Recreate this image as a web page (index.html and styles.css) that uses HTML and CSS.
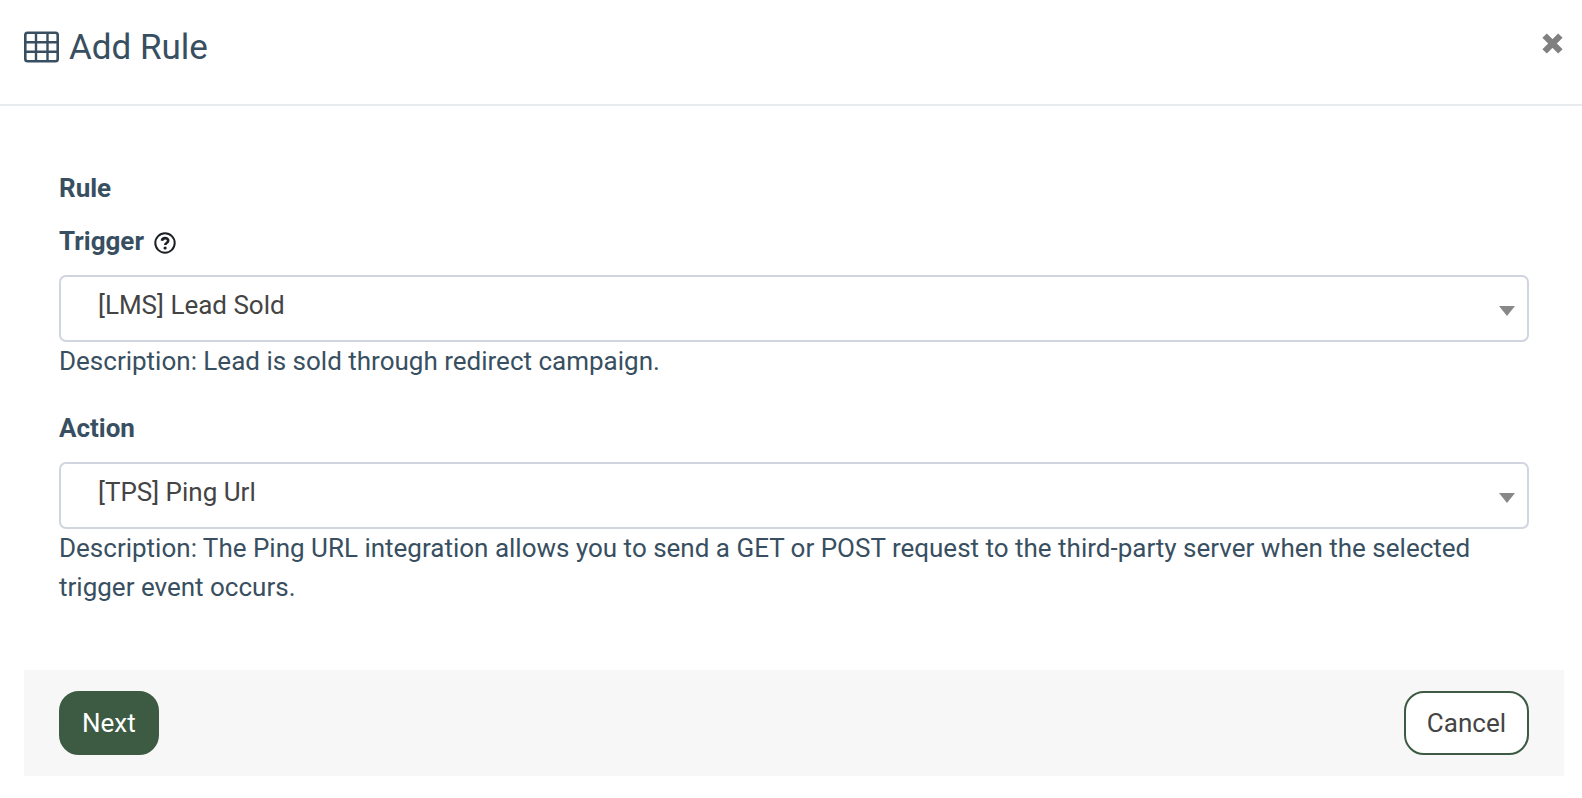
FILE: index.html
```html
<!DOCTYPE html>
<html lang="en">
<head>
  <meta charset="UTF-8">
  <meta name="viewport" content="width=device-width, initial-scale=1.0">
  <title>Add Rule</title>
  <link rel="stylesheet" href="styles.css">
</head>
<body>

  <div class="modal">
    <!-- Header -->
    <header class="modal-header">
      <h1 class="modal-title">
        <svg class="table-icon" viewBox="0 0 36 32" aria-hidden="true">
          <path class="table-frame" fill-rule="evenodd" d="M3.5 0.5h28a3.5 3.5 0 0 1 3.5 3.5v24a3.5 3.5 0 0 1-3.5 3.5h-28A3.5 3.5 0 0 1 0 28V4A3.5 3.5 0 0 1 3.5.5zM3.6 3a1 1 0 0 0-1 1v24a1 1 0 0 0 1 1h27.8a1 1 0 0 0 1-1V4a1 1 0 0 0-1-1z"/>
          <path d="M12 2v28M23.5 2v28M1.5 11.3h32M1.5 20.7h32"/>
        </svg>
        Add Rule
      </h1>
      <button class="close-button" type="button" aria-label="Close">
        <svg viewBox="0 0 20 20" aria-hidden="true">
          <path d="M2.5 2.5l15 15M17.5 2.5l-15 15"/>
        </svg>
      </button>
    </header>

    <form class="rule-form">
      <div class="form-body">
        <h2 class="section-title">Rule</h2>

        <!-- Trigger -->
        <div class="form-group">
          <div class="label-row">
            <label for="trigger">Trigger</label>
            <svg class="help-icon" viewBox="0 0 22 22" role="img" aria-label="Help">
              <circle cx="11" cy="11" r="9.7"/>
              <path d="M7.9 8.7C8.2 6.9 9.4 6.1 11.1 6.1c1.8 0 3.1 1 3.1 2.5 0 1.2-.7 1.8-1.6 2.4-.9.6-1.4 1-1.4 2.1"/>
              <circle class="help-dot" cx="11.1" cy="16" r="1.6"/>
            </svg>
          </div>
          <div class="select-wrap">
            <select id="trigger">
              <option>[LMS] Lead Sold</option>
            </select>
          </div>
          <p class="description">Description: Lead is sold through redirect campaign.</p>
        </div>

        <!-- Action -->
        <div class="form-group">
          <div class="label-row">
            <label for="action">Action</label>
          </div>
          <div class="select-wrap">
            <select id="action">
              <option>[TPS] Ping Url</option>
            </select>
          </div>
          <p class="description">Description: The Ping URL integration allows you to send a GET or POST request to the third-party server when the selected trigger event occurs.</p>
        </div>
      </div>

      <!-- Buttons -->
      <footer class="form-footer">
        <button class="button next-button" type="button">Next</button>
        <button class="button cancel-button" type="button">Cancel</button>
      </footer>
    </form>
  </div>

</body>
</html>
```

FILE: styles.css
```css
* {
  box-sizing: border-box;
}

body {
  margin: 0;
  background-color: #fff;
  font-family: Roboto, sans-serif;
  font-size: 26px;
  line-height: 39px;
  color: #384f61;
}

h1, h2, p {
  margin: 0;
}

/* Header */
.modal-header {
  display: flex;
  justify-content: space-between;
  align-items: flex-start;
  padding: 24px 19px 32px 24px;
  border-bottom: 2px solid #e8ebee;
}

.modal-title {
  display: flex;
  align-items: center;
  gap: 9px;
  font-size: 35px;
  font-weight: 400;
  line-height: 48px;
}

.table-icon {
  width: 36px;
  height: 32px;
  margin-bottom: 2px;
  fill: none;
  stroke: currentColor;
  stroke-width: 2.4;
}

.table-icon .table-frame {
  fill: currentColor;
  stroke: none;
}

.close-button {
  display: flex;
  margin-top: 9px;
  padding: 0;
  border: 0;
  background: none;
  cursor: pointer;
}

.close-button svg {
  width: 21px;
  height: 21px;
  stroke: #808080;
  stroke-width: 6;
}

/* Form */
.form-body {
  padding: 63px 53px 63px 59px;
}

.section-title {
  margin-bottom: 14px;
  font-size: 26px;
  font-weight: 700;
}

.form-group + .form-group {
  margin-top: 28px;
}

.label-row {
  display: flex;
  align-items: center;
  gap: 10px;
  margin-bottom: 14px;
  font-weight: 700;
}

.help-icon {
  width: 22px;
  height: 22px;
  margin-top: 2px;
  fill: none;
  stroke: #1c1f24;
  stroke-width: 2;
}

.help-icon path {
  stroke-width: 2.6;
}

.help-icon .help-dot {
  fill: #1c1f24;
  stroke: none;
}

.select-wrap {
  position: relative;
}

.select-wrap::after {
  content: "";
  position: absolute;
  top: 31px;
  right: 14px;
  border: 8px solid transparent;
  border-top: 10px solid #888;
  border-bottom: 0;
  pointer-events: none;
}

select {
  display: block;
  width: 100%;
  height: 67px;
  padding: 0 48px 6px 37px;
  border: 2px solid #d1d5e0;
  border-radius: 7px;
  background-color: #fff;
  color: #444;
  font: inherit;
  appearance: none;
}

/* Footer */
.form-footer {
  display: flex;
  justify-content: space-between;
  margin: 0 18px 22px 24px;
  padding: 21px 35px;
  background-color: #f7f7f7;
}

.button {
  height: 64px;
  padding: 0 21px;
  border: 2px solid #3d5a43;
  border-radius: 20px;
  font: inherit;
  cursor: pointer;
}

.next-button {
  background-color: #3d5a43;
  color: #fff;
}

.cancel-button {
  background-color: #fff;
  color: #444;
}
```
